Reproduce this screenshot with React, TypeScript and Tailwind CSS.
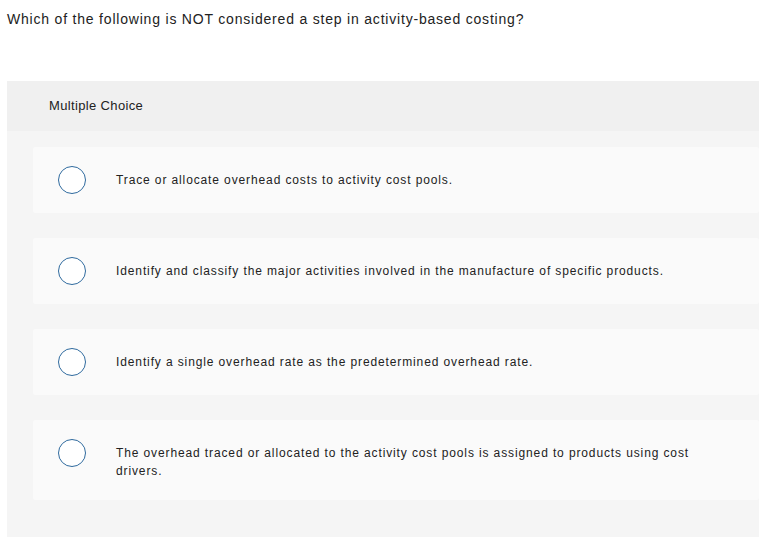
const options = [
  "Trace or allocate overhead costs to activity cost pools.",
  "Identify and classify the major activities involved in the manufacture of specific products.",
  "Identify a single overhead rate as the predetermined overhead rate.",
  "The overhead traced or allocated to the activity cost pools is assigned to products using cost drivers.",
];

function Radio() {
  return <span className="block h-[28px] w-[28px] shrink-0 rounded-full border-[1.5px] border-[#2f6a9e] bg-white" />;
}

export default function App() {
  return (
    <div className="min-h-[537px] bg-white text-[#222] font-['Liberation_Sans',Arial,sans-serif]">
      <h1 className="px-[7px] pt-[10px] text-[14px] leading-[18px] tracking-[0.8px]">
        Which of the following is NOT considered a step in activity-based costing?
      </h1>
      <section className="ml-[7px] mt-[53px] min-h-[456px] bg-[#f5f5f5]">
        <div className="flex h-[50px] items-center bg-[#f0f0f0] pl-[42px] text-[13px] tracking-[0.35px]">
          Multiple Choice
        </div>
        <div className="flex flex-col gap-[25px] pl-[26px] pt-[16px]">
          {options.map((o) => (
            <label key={o} className="flex min-h-[66px] items-start rounded-[2px] bg-[#fafafa] py-[19px] pl-[25px]">
              <Radio />
              <span className="ml-[30px] mt-[5px] pb-[1px] max-w-[590px] text-[12px] leading-[18px] tracking-[0.88px]">
                {o}
              </span>
            </label>
          ))}
        </div>
      </section>
    </div>
  );
}
